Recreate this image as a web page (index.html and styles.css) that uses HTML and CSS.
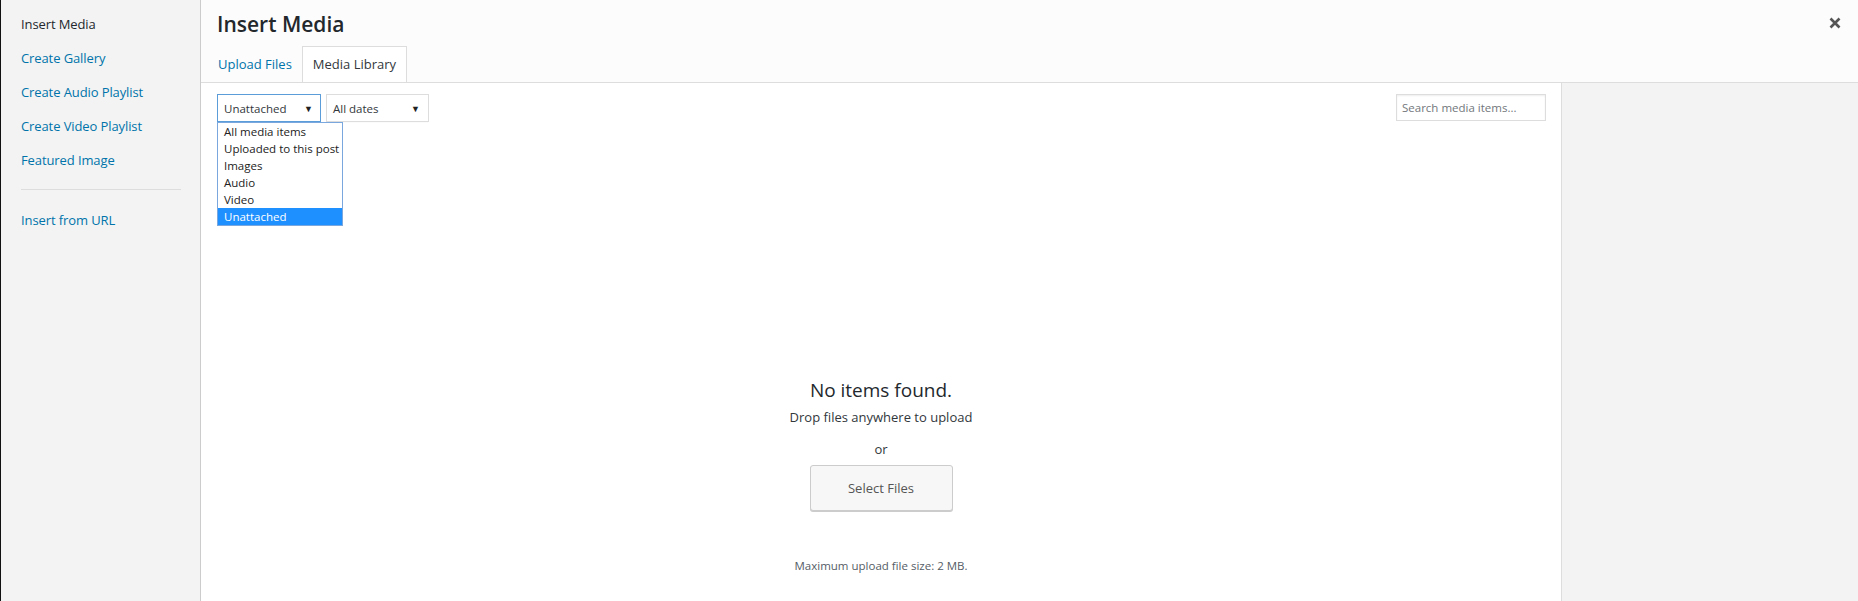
FILE: index.html
```html
<!DOCTYPE html>
<html>
<head>
<meta charset="utf-8">
<link rel="stylesheet" href="styles.css">
</head>
<body>
<div class="frame">
  <aside class="menu">
    <a class="menu-item active">Insert Media</a>
    <a class="menu-item">Create Gallery</a>
    <a class="menu-item">Create Audio Playlist</a>
    <a class="menu-item">Create Video Playlist</a>
    <a class="menu-item">Featured Image</a>
    <div class="menu-sep"></div>
    <a class="menu-item">Insert from URL</a>
  </aside>
  <main class="main">
    <header class="head">
      <div class="title-row">
        <h1 class="title">Insert Media</h1>
        <span class="close">
          <svg width="12" height="12" viewBox="0 0 12 12"><path d="M1.5 1.5 L10.5 10.5 M10.5 1.5 L1.5 10.5" stroke="#555" stroke-width="2.6" stroke-linecap="butt"/></svg>
        </span>
      </div>
      <nav class="tabs">
        <a class="tab">Upload Files</a>
        <a class="tab current">Media Library</a>
      </nav>
    </header>
    <div class="body">
      <section class="browser">
        <div class="toolbar">
          <div class="filters">
            <div class="select focus">
              <span>Unattached</span><span class="arrow">▼</span>
              <ul class="dropdown">
                <li>All media items</li>
                <li>Uploaded to this post</li>
                <li>Images</li>
                <li>Audio</li>
                <li>Video</li>
                <li class="sel">Unattached</li>
              </ul>
            </div>
            <div class="select dates">
              <span>All dates</span><span class="arrow">▼</span>
            </div>
          </div>
          <div class="search">Search media items...</div>
        </div>
        <div class="empty">
          <h2 class="empty-title">No items found.</h2>
          <p class="drop">Drop files anywhere to upload</p>
          <p class="or">or</p>
          <button class="btn">Select Files</button>
          <p class="max">Maximum upload file size: 2 MB.</p>
        </div>
      </section>
      <aside class="details"></aside>
    </div>
  </main>
</div>
</body>
</html>
```

FILE: styles.css
```css
* { box-sizing: border-box; }
html, body { margin: 0; padding: 0; height: 100%; }
body {
  font-family: "Open Sans", "Noto Sans", sans-serif;
  color: #444;
  background: #fff;
}
.frame {
  display: flex;
  height: 601px;
  border-left: 1px solid #111;
}
.menu {
  width: 200px;
  flex: none;
  background: #f3f3f3;
  border-right: 1px solid #ccc;
  padding: 14px 0 0 20px;
}
.menu-item {
  display: block;
  font-size: 13px;
  line-height: 20px;
  padding: 0;
  margin-bottom: 14px;
  color: #0073aa;
  letter-spacing: -0.1px;
}
.menu-item.active { color: #23282d; }
.menu-sep {
  width: 160px;
  height: 1px;
  background: #ddd;
  margin: 19px 0 20px;
}
.main {
  flex: 1;
  display: flex;
  flex-direction: column;
}
.head {
  background: #fcfcfc;
  border-bottom: 1px solid #ddd;
  height: 83px;
  padding: 0 0 0 16px;
  display: flex;
  flex-direction: column;
}
.title-row {
  display: flex;
  justify-content: space-between;
  align-items: flex-start;
  height: 47px;
}
.title {
  margin: 8px 0 0;
  font-size: 21px;
  font-weight: 600;
  line-height: 32px;
  color: #23282d;
}
.close {
  margin: 17px 17px 0 0;
  width: 12px;
  height: 12px;
  display: block;
}
.close svg { display: block; }
.tabs {
  display: flex;
  height: 36px;
}
.tab {
  font-size: 13px;
  line-height: 34px;
  color: #0073aa;
  padding: 0 10px 0 0;
  border: 1px solid transparent;
  border-bottom: none;
}
.tab.current {
  color: #32373c;
  background: #fff;
  border-color: #ddd;
  padding: 0 10px;
  height: 36px;
  margin-left: -1px;
}
.body {
  flex: 1;
  display: flex;
}
.browser {
  flex: 1;
  background: #fff;
  display: flex;
  flex-direction: column;
}
.details {
  width: 297px;
  flex: none;
  background: #f3f3f3;
  border-left: 1px solid #ddd;
}
.toolbar {
  display: flex;
  justify-content: space-between;
  padding: 11px 15px 0 16px;
  height: 39px;
}
.filters { display: flex; gap: 5px; }
.select {
  position: relative;
  display: flex;
  justify-content: space-between;
  align-items: center;
  width: 104px;
  height: 28px;
  border: 1px solid #ddd;
  background: #fff;
  font-size: 11.5px;
  color: #32373c;
  padding: 0 7px 0 6px;
  box-shadow: 0 1px 1px -1px rgba(0,0,0,.1);
}
.select.focus { border-color: #5b9dd9; }
.select.dates { width: 103px; padding-right: 8px; }
.arrow { font-size: 9px; color: #222; }
.dropdown {
  position: absolute;
  left: -1px;
  top: 27px;
  width: 126px;
  margin: 0;
  padding: 0;
  list-style: none;
  background: #fff;
  border: 1px solid #7aa7dd;
  z-index: 2;
}
.dropdown li {
  height: 17px;
  line-height: 17px;
  font-size: 11.5px;
  padding-left: 6px;
  color: #222;
  white-space: nowrap;
}
.dropdown li.sel { background: #1e90ff; color: #fff; }
.search {
  width: 150px;
  height: 27px;
  border: 1px solid #ddd;
  font-size: 11.5px;
  line-height: 25px;
  padding-left: 5px;
  color: #72777c;
  box-shadow: inset 0 1px 2px rgba(0,0,0,.07);
}
.empty {
  display: flex;
  flex-direction: column;
  align-items: center;
  padding-top: 254px;
}
.empty-title {
  margin: 0;
  font-size: 19px;
  font-weight: 400;
  line-height: 28px;
  color: #23282d;
}
.drop {
  margin: 3px 0 0;
  font-size: 13px;
  line-height: 20px;
  color: #32373c;
}
.or {
  margin: 12px 0 0;
  font-size: 13px;
  line-height: 20px;
  color: #32373c;
}
.btn {
  margin-top: 6px;
  width: 143px;
  height: 46px;
  background: #f7f7f7;
  border: 1px solid #ccc;
  border-radius: 3px;
  box-shadow: 0 1px 0 #ccc;
  font-family: inherit;
  font-size: 13px;
  color: #555;
}
.max {
  margin: 47px 0 0;
  font-size: 11.5px;
  color: #555d66;
}
```
